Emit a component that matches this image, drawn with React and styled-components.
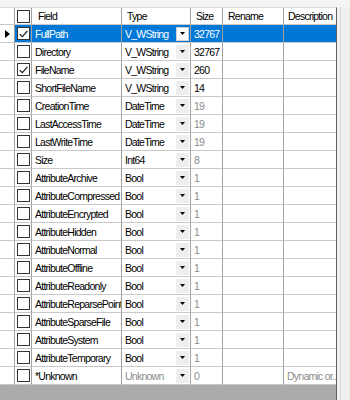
import styled, { createGlobalStyle } from 'styled-components';

const GlobalStyle = createGlobalStyle`
  html, body {
    margin: 0;
    padding: 0;
    background: #f0f0f0;
  }
  body {
    font-family: "Liberation Sans", Arial, sans-serif;
  }
`;

const COLS = '15px 17px 90px 69px 32px 61px 52px';

const fields = [
  { name: 'FullPath', type: 'V_WString', size: '32767', checked: true, current: true },
  { name: 'Directory', type: 'V_WString', size: '32767' },
  { name: 'FileName', type: 'V_WString', size: '260', checked: true },
  { name: 'ShortFileName', type: 'V_WString', size: '14' },
  { name: 'CreationTime', type: 'DateTime', size: '19', dim: true },
  { name: 'LastAccessTime', type: 'DateTime', size: '19', dim: true },
  { name: 'LastWriteTime', type: 'DateTime', size: '19', dim: true },
  { name: 'Size', type: 'Int64', size: '8', dim: true },
  { name: 'AttributeArchive', type: 'Bool', size: '1', dim: true },
  { name: 'AttributeCompressed', type: 'Bool', size: '1', dim: true },
  { name: 'AttributeEncrypted', type: 'Bool', size: '1', dim: true },
  { name: 'AttributeHidden', type: 'Bool', size: '1', dim: true },
  { name: 'AttributeNormal', type: 'Bool', size: '1', dim: true },
  { name: 'AttributeOffline', type: 'Bool', size: '1', dim: true },
  { name: 'AttributeReadonly', type: 'Bool', size: '1', dim: true },
  { name: 'AttributeReparsePoint', type: 'Bool', size: '1', dim: true },
  { name: 'AttributeSparseFile', type: 'Bool', size: '1', dim: true },
  { name: 'AttributeSystem', type: 'Bool', size: '1', dim: true },
  { name: 'AttributeTemporary', type: 'Bool', size: '1', dim: true },
  { name: '*Unknown', type: 'Unknown', size: '0', dim: true, typeDim: true, desc: 'Dynamic or..' },
];

const Page = styled.div`
  width: 350px;
  height: 400px;
  display: flex;
  flex-direction: column;
  overflow: hidden;
`;

const TopStrip = styled.div`
  height: 7px;
  background: #f4f4f4;
  flex: none;
`;

const Body = styled.div`
  flex: 1;
  display: flex;
  min-height: 0;
`;

const GridPanel = styled.div`
  width: 337px;
  display: flex;
  flex-direction: column;
  border-right: 1px solid #646464;
  box-sizing: border-box;
  border-top: 1px solid #d8d8d8;
`;

const SideStrip = styled.div`
  flex: 1;
  display: flex;
  background: #f0f0f0;
`;

const SideLine = styled.div`
  width: 1px;
  margin-left: 3px;
  background: #d9d9d9;
`;

const Row = styled.div`
  display: grid;
  grid-template-columns: ${COLS};
  height: ${(p) => (p.$header ? '17px' : '18px')};
  background: #fff;
  font-size: 10.5px;
  letter-spacing: -0.75px;
  flex: none;
`;

const Cell = styled.div`
  box-sizing: border-box;
  border-right: 1px solid #a0a0a0;
  border-bottom: 1px solid #c8c8c8;
  display: flex;
  align-items: center;
  padding-left: ${(p) => p.$pad ?? 3}px;
  white-space: nowrap;
  overflow: hidden;
  background: ${(p) => (p.$selected ? '#0078d7' : '#fff')};
  color: ${(p) => (p.$selected ? '#fff' : p.$dim ? '#8c8c8c' : '#000')};
  &:last-child {
    border-right: none;
  }
`;

const RowHead = styled(Cell)`
  justify-content: center;
  padding-left: 0;
  background: #fff;
`;

const CheckCell = styled(Cell)`
  padding-left: 2px;
`;

const Box = styled.span`
  width: 13px;
  height: 13px;
  box-sizing: border-box;
  border: 1px solid #333;
  background: #fff;
  display: flex;
  align-items: center;
  justify-content: center;
`;

const TypeCell = styled(Cell)`
  justify-content: space-between;
  padding-right: 1px;
`;

const DropButton = styled.span`
  width: 13px;
  height: 14px;
  box-sizing: border-box;
  display: flex;
  align-items: center;
  justify-content: center;
  background: ${(p) => (p.$selected ? '#fff' : '#eeeeee')};
  border: 1px solid ${(p) => (p.$selected ? '#d0d0d0' : '#eeeeee')};
`;

const Workspace = styled.div`
  flex: 1;
  background: #ababab;
`;

function CheckBox({ checked }) {
  return (
    <Box>
      {checked && (
        <svg width="9" height="8" viewBox="0 0 9 8">
          <path d="M0.8 4.2 L3.3 6.6 L8.3 1" fill="none" stroke="#222" strokeWidth="1.2" />
        </svg>
      )}
    </Box>
  );
}

function Arrow() {
  return (
    <svg width="5" height="3" viewBox="0 0 5 3">
      <path d="M0 0 H5 L2.5 3 Z" fill="#000" />
    </svg>
  );
}

function Pointer() {
  return (
    <svg width="5" height="8" viewBox="0 0 5 8">
      <path d="M0 0 L5 4 L0 8 Z" fill="#000" />
    </svg>
  );
}

export default function App() {
  return (
    <>
      <GlobalStyle />
      <Page>
        <TopStrip />
        <Body>
          <GridPanel>
            <Row $header>
              <RowHead />
              <CheckCell>
                <CheckBox />
              </CheckCell>
              <Cell $pad={6}>Field</Cell>
              <Cell $pad={5}>Type</Cell>
              <Cell $pad={5}>Size</Cell>
              <Cell $pad={5}>Rename</Cell>
              <Cell $pad={4}>Description</Cell>
            </Row>
            {fields.map((f) => {
              const sel = !!f.current;
              return (
                <Row key={f.name}>
                  <RowHead>{f.current && <Pointer />}</RowHead>
                  <CheckCell $selected={sel}>
                    <CheckBox checked={f.checked} />
                  </CheckCell>
                  <Cell $selected={sel}>{f.name}</Cell>
                  <TypeCell $selected={sel} $dim={f.typeDim}>
                    {f.type}
                    <DropButton $selected={sel}>
                      <Arrow />
                    </DropButton>
                  </TypeCell>
                  <Cell $selected={sel} $dim={f.dim}>{f.size}</Cell>
                  <Cell $selected={sel} />
                  <Cell $selected={sel} $dim>{f.desc}</Cell>
                </Row>
              );
            })}
            <Workspace />
          </GridPanel>
          <SideStrip>
            <SideLine />
          </SideStrip>
        </Body>
      </Page>
    </>
  );
}
